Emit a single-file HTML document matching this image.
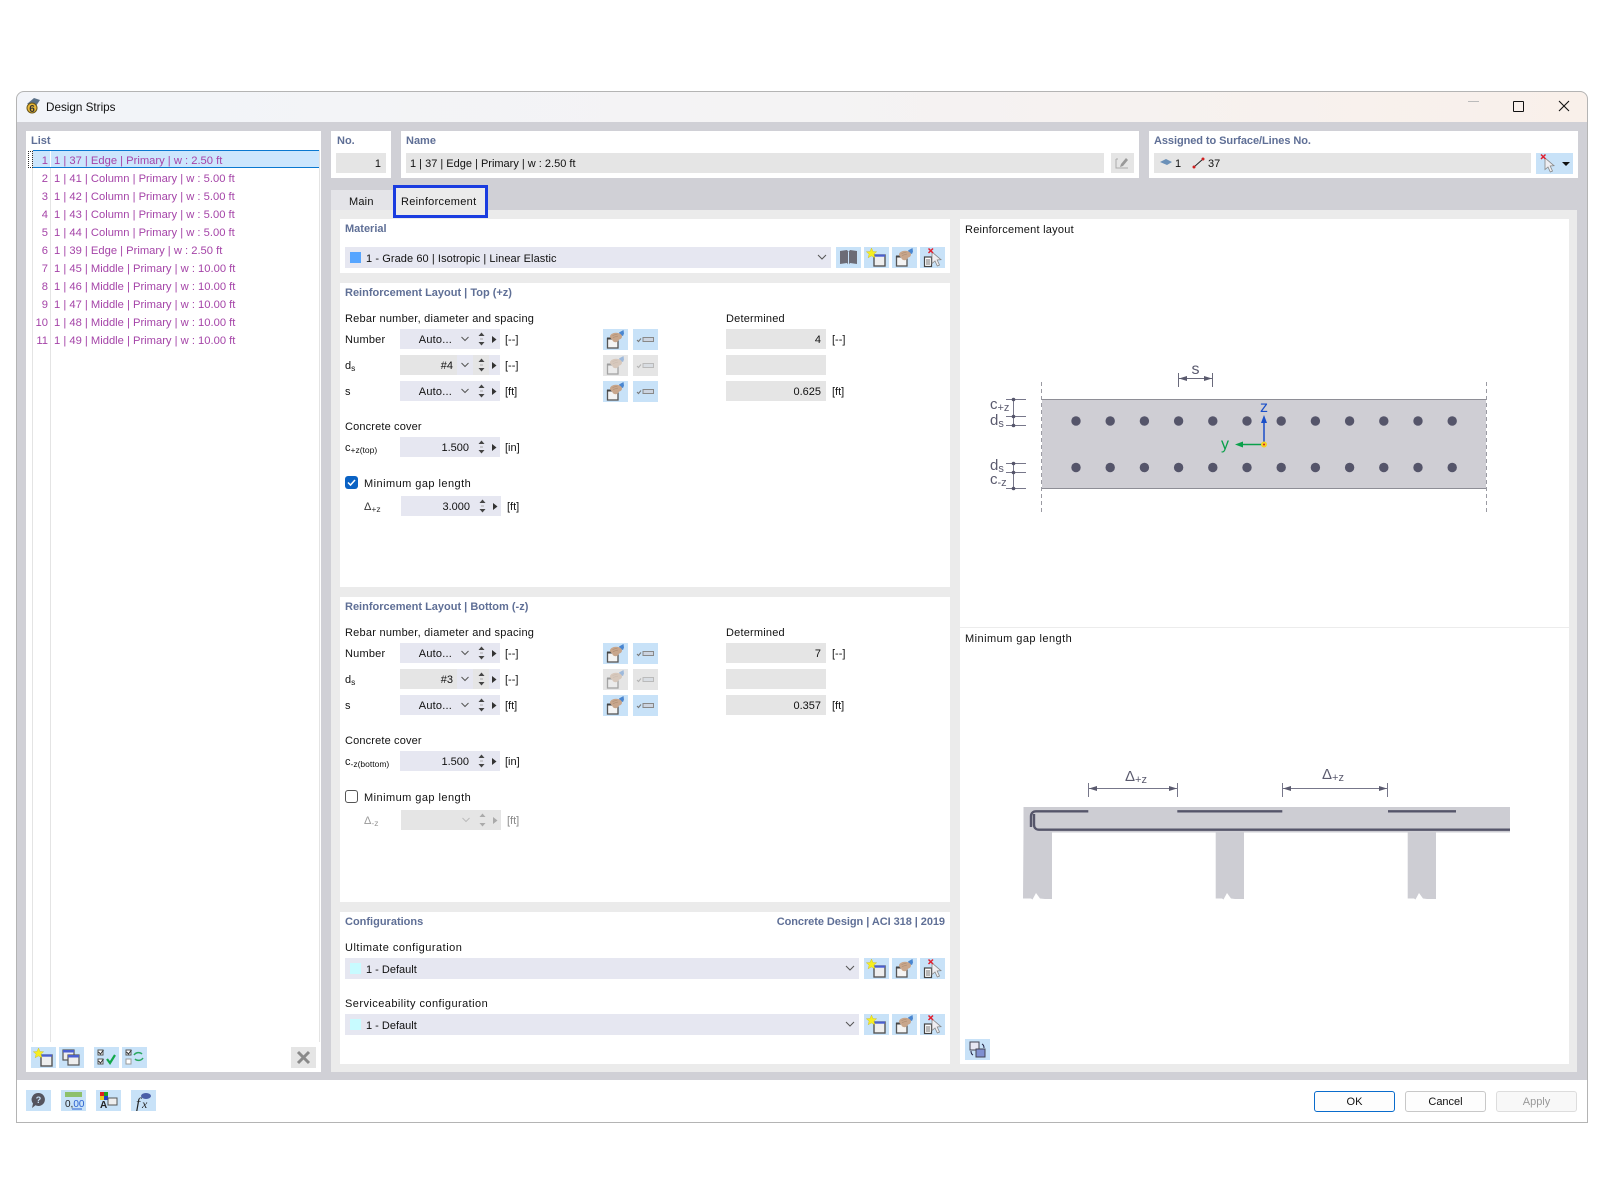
<!DOCTYPE html>
<html><head><meta charset="utf-8"><title>Design Strips</title>
<style>
html,body{margin:0;padding:0;background:#fff;width:1600px;height:1200px;overflow:hidden}
body{position:relative;font-family:"Liberation Sans",sans-serif;font-size:11px;color:#111}
div,span.a{position:absolute}
.t{position:absolute;white-space:nowrap;line-height:14px;height:14px;margin-top:1px}
.t.v{margin-top:0}
.r{text-align:right}
.h{font-weight:bold;color:#5f6f96;font-size:11px}
.p{color:#a544a8;font-size:11.2px}
.w{background:#fff}
.f{background:#e5e5e5}
.c{background:#e6e7f1}
.b{position:absolute;width:25px;height:21px;background:#c8e2f8}
.b svg,.ctl{position:absolute;left:0;top:0}
.g{background:#e5e5e5}
sub{font-size:8.5px;vertical-align:-2px;line-height:0}
.btn{position:absolute;top:1091px;width:79px;height:19px;border:1px solid #c8c8c8;border-radius:3px;background:#fdfdfd;text-align:center;line-height:21px;font-size:11px}
.au{letter-spacing:.2px}
.rb{letter-spacing:.24px}
.cc{letter-spacing:.15px}
.de{letter-spacing:.2px}
.mg{letter-spacing:.45px}
</style></head><body>
<svg width="0" height="0" style="position:absolute">
<defs>
<symbol id="new" viewBox="0 0 25 21"><rect x="10" y="8" width="11" height="11" fill="#eee" stroke="#555" stroke-width="1.400"/><rect x="10" y="7.500" width="11" height="2.200" fill="#4a5fd0"/><path d="M7.500 1l1.500 3.500 3.700.2-2.800 2.400 1 3.700L7.500 8.900l-3.400 1.900 1-3.700L2.300 4.700 6 4.500z" fill="#f6ee20" stroke="#c9b820" stroke-width=".4"/></symbol>
<symbol id="edit" viewBox="0 0 25 21"><rect x="4.500" y="9.500" width="10.500" height="9.500" fill="#f4f4f4" stroke="#555" stroke-width="1.300"/><rect x="4" y="8.500" width="11.500" height="2" fill="#444"/><path d="M16 3.500l4.500-2.500.5 3.500-1 2.500-3-1z" fill="#4a86d0"/><ellipse cx="13" cy="7.500" rx="6" ry="3.800" fill="#c8a68c"/><ellipse cx="12.500" cy="10.800" rx="3.200" ry="2.400" fill="#c8a68c"/><path d="M9.500 6.500l5-1.500M10 8.500l5-1.500" stroke="#a98a70" stroke-width=".6"/></symbol>
<symbol id="del" viewBox="0 0 25 21"><rect x="4.500" y="10" width="7" height="9.500" fill="#fff" stroke="#444" stroke-width="1.200"/><path d="M6 13h4M6 15h4M6 17h4" stroke="#444" stroke-width=".8"/><path d="M12 5l0 11.500 3-2.500 2.300 5 2.200-1-2.300-5 3.800-.3z" fill="#eeeef2" stroke="#888" stroke-width=".8"/><path d="M8.500 1.500l4.500 4.500M13 1.500L8.500 6" stroke="#e02030" stroke-width="1.500"/></symbol>
<symbol id="book" viewBox="0 0 25 21"><path d="M4 4l7-1 1.500 2 1.500-2 7 1v13l-7-1-1.500 2-1.500-2-7 1z" fill="#6c6c76"/><path d="M12.500 5v13" stroke="#c8e2f8" stroke-width="1"/></symbol>
<symbol id="chk" viewBox="0 0 25 21"><path d="M4 11l1.500 1.500L8 9.500" stroke="#777" stroke-width="1.100" fill="none"/><rect x="10" y="8.500" width="10.500" height="4" fill="#ccd4e0" stroke="#888" stroke-width="1"/></symbol>
<symbol id="ctl" viewBox="0 0 100 20"><path d="M61.500 8l3.500 3.500L68.500 8" fill="none" stroke="#555" stroke-width="1"/><path d="M81.500 3.500l3 3.500h-6zM81.500 16.500l-3-3.500h6z" fill="#444"/><path d="M80 10h3" stroke="#aaa"/><path d="M92 7l4.500 3.500L92 14z" fill="#333"/></symbol>
<symbol id="ctl2" viewBox="0 0 100 20"><path d="M81.500 3.500l3 3.500h-6zM81.500 16.500l-3-3.500h6z" fill="#444"/><path d="M80 10h3" stroke="#aaa"/><path d="M92 7l4.500 3.500L92 14z" fill="#333"/></symbol>
<symbol id="ctl3" viewBox="0 0 100 20"><path d="M61.500 8l3.500 3.500L68.500 8" fill="none" stroke="#bbb" stroke-width="1"/><path d="M81.500 3.500l3 3.500h-6zM81.500 16.500l-3-3.500h6z" fill="#aaa"/><path d="M92 7l4.500 3.500L92 14z" fill="#aaa"/></symbol>
<symbol id="chev" viewBox="0 0 12 8"><path d="M2 2l4 4 4-4" fill="none" stroke="#555" stroke-width="1"/></symbol>
</defs>
</svg>

<!-- window -->
<div style="left:16px;top:91px;width:1572px;height:1032px;background:#fff;border-radius:8px 8px 0 0"></div>
<div style="left:16px;top:91px;width:1572px;height:31px;border-radius:8px 8px 0 0;background:linear-gradient(90deg,#f2f4f9,#f4f3f4 50%,#f9f0ea)"></div>
<svg style="position:absolute;left:24px;top:97px" width="18" height="18" viewBox="0 0 18 18"><path d="M3 7l7-6 6 2-4 6z" fill="#5a7088"/><circle cx="8" cy="11" r="5" fill="#e8b93a" stroke="#6a5518"/><text x="8" y="15" font-size="10" font-weight="bold" text-anchor="middle" font-family="Liberation Sans" fill="#333">6</text></svg>
<div class="t" style="left:46px;top:100px;font-size:11.7px">Design Strips</div>
<div style="left:1468px;top:101px;width:11px;height:1px;background:#bbb"></div>
<div style="left:1513px;top:101px;width:9px;height:9px;border:1.300px solid #111;border-radius:1px"></div>
<svg style="position:absolute;left:1558px;top:100px" width="12" height="12"><path d="M1 1l10 10M11 1L1 11" stroke="#111" stroke-width="1.100"/></svg>

<!-- main gray -->
<div style="left:16px;top:122px;width:1572px;height:958px;background:#d0d0d6"></div>

<!-- list -->
<div class="w" style="left:26px;top:131px;width:295px;height:941px"></div>
<div class="t h" style="left:31px;top:133px">List</div>
<div style="left:32px;top:150px;width:1px;height:892px;background:#e4e4e4"></div>
<div style="left:50px;top:150px;width:1px;height:892px;background:#e4e4e4"></div>
<div style="left:319px;top:150px;width:1px;height:892px;background:#e4e4e4"></div>
<div style="left:33px;top:150px;width:286px;height:16px;background:#cce6fd;border-top:1px solid #0a78d0;border-bottom:1px solid #0a78d0"></div>
<div style="left:50px;top:151px;width:1px;height:16px;background:#fff"></div>
<div style="left:28px;top:151px;width:3px;height:15px;border:1px dotted #333"></div>
<div class="t r p" style="left:28px;width:20px;top:153px">1</div><div class="t p" style="left:54px;top:153px">1 | 37 | Edge | Primary | w : 2.50 ft</div>
<div class="t r p" style="left:28px;width:20px;top:171px">2</div><div class="t p" style="left:54px;top:171px">1 | 41 | Column | Primary | w : 5.00 ft</div>
<div class="t r p" style="left:28px;width:20px;top:189px">3</div><div class="t p" style="left:54px;top:189px">1 | 42 | Column | Primary | w : 5.00 ft</div>
<div class="t r p" style="left:28px;width:20px;top:207px">4</div><div class="t p" style="left:54px;top:207px">1 | 43 | Column | Primary | w : 5.00 ft</div>
<div class="t r p" style="left:28px;width:20px;top:225px">5</div><div class="t p" style="left:54px;top:225px">1 | 44 | Column | Primary | w : 5.00 ft</div>
<div class="t r p" style="left:28px;width:20px;top:243px">6</div><div class="t p" style="left:54px;top:243px">1 | 39 | Edge | Primary | w : 2.50 ft</div>
<div class="t r p" style="left:28px;width:20px;top:261px">7</div><div class="t p" style="left:54px;top:261px">1 | 45 | Middle | Primary | w : 10.00 ft</div>
<div class="t r p" style="left:28px;width:20px;top:279px">8</div><div class="t p" style="left:54px;top:279px">1 | 46 | Middle | Primary | w : 10.00 ft</div>
<div class="t r p" style="left:28px;width:20px;top:297px">9</div><div class="t p" style="left:54px;top:297px">1 | 47 | Middle | Primary | w : 10.00 ft</div>
<div class="t r p" style="left:28px;width:20px;top:315px">10</div><div class="t p" style="left:54px;top:315px">1 | 48 | Middle | Primary | w : 10.00 ft</div>
<div class="t r p" style="left:28px;width:20px;top:333px">11</div><div class="t p" style="left:54px;top:333px">1 | 49 | Middle | Primary | w : 10.00 ft</div>

<!-- list buttons -->
<div class="b" style="left:31px;top:1047px"><svg width="25" height="21"><use href="#new"/></svg></div>
<div class="b" style="left:59px;top:1047px"><svg width="25" height="21" viewBox="0 0 25 21"><rect x="4" y="3" width="11" height="10" fill="#eee" stroke="#555" stroke-width="1.200"/><rect x="4" y="3" width="11" height="2.500" fill="#4a5fd0"/><rect x="9" y="8" width="11" height="10" fill="#eee" stroke="#555" stroke-width="1.200"/><rect x="9" y="8" width="11" height="2.500" fill="#4a5fd0"/></svg></div>
<div class="b" style="left:94px;top:1047px"><svg width="25" height="21" viewBox="0 0 25 21"><rect x="4" y="3" width="5" height="5" fill="#fff" stroke="#555"/><rect x="4" y="12" width="5" height="5" fill="#fff" stroke="#555"/><path d="M4.500 5l2 2 3-4M4.500 14l2 2 3-4" stroke="#333" fill="none"/><path d="M13 12l3 4 5-8" stroke="#12a84a" stroke-width="2.200" fill="none"/></svg></div>
<div class="b" style="left:122px;top:1047px"><svg width="25" height="21" viewBox="0 0 25 21"><rect x="4" y="3" width="5" height="5" fill="#fff" stroke="#555"/><rect x="4" y="12" width="5" height="5" fill="#fff" stroke="#999"/><path d="M4.500 5l2 2 3-4" stroke="#333" fill="none"/><path d="M12 8c2-3 6-3 8-1M21 11c-2 3-6 3-8 1" stroke="#2aa860" stroke-width="1.500" fill="none"/></svg></div>
<div class="b g" style="left:291px;top:1047px"><svg width="25" height="21" viewBox="0 0 25 21"><path d="M7 5l11 11M18 5L7 16" stroke="#8a8a8a" stroke-width="3"/></svg></div>

<!-- No -->
<div class="w" style="left:331px;top:131px;width:60px;height:47px"></div>
<div class="t h" style="left:337px;top:133px">No.</div>
<div class="f" style="left:336px;top:153px;width:50px;height:20px"></div>
<div class="t r v" style="left:336px;width:45px;top:157px">1</div>

<!-- Name -->
<div class="w" style="left:401px;top:131px;width:738px;height:47px"></div>
<div class="t h" style="left:406px;top:133px">Name</div>
<div class="f" style="left:406px;top:153px;width:698px;height:20px"></div>
<div class="t v" style="left:410px;top:157px">1 | 37 | Edge | Primary | w : 2.50 ft</div>
<div class="b g" style="left:1111px;top:153px;width:23px;height:20px"><svg width="23" height="20" viewBox="0 0 23 20"><path d="M5 6v9h12M7 6H5" stroke="#aaa" fill="none"/><path d="M9 14l1-3 5-6 2 2-5 6z" fill="#999"/></svg></div>

<!-- Assigned -->
<div class="w" style="left:1149px;top:131px;width:429px;height:47px"></div>
<div class="t h" style="left:1154px;top:133px;letter-spacing:-.07px">Assigned to Surface/Lines No.</div>
<div class="f" style="left:1154px;top:153px;width:377px;height:20px"></div>
<svg style="position:absolute;left:1160px;top:156px" width="50" height="14" viewBox="0 0 50 14"><path d="M0 6l6-3 6 3-5 3z" fill="#6a90b8"/><path d="M34 11l9-8" stroke="#222" stroke-width="1"/><circle cx="34" cy="11" r="1.500" fill="#d02020"/><circle cx="43" cy="3" r="1.500" fill="#d02020"/></svg>
<div class="t v" style="left:1175px;top:157px">1</div>
<div class="t v" style="left:1208px;top:157px">37</div>
<div class="b" style="left:1536px;top:153px;width:37px"><svg width="37" height="21" viewBox="0 0 37 21"><path d="M9 5l0 11.500 3-2.500 2.300 5 2.200-1-2.300-5 3.800-.3z" fill="#eeeef2" stroke="#888" stroke-width=".8"/><path d="M5 1.500l4.500 4.500M9.500 1.500L5 6" stroke="#e02030" stroke-width="1.500"/><path d="M26 9h8l-4 4z" fill="#111"/></svg></div>

<!-- tabs -->
<div style="left:331px;top:190px;width:62px;height:20px;background:#e4e4e8"></div>
<div class="t" style="left:349px;top:194px;letter-spacing:.2px">Main</div>
<div style="left:331px;top:210px;width:1246px;height:862px;background:#ebebeb"></div>
<div style="left:393px;top:185px;width:89px;height:27px;border:3px solid #1a3ce0;background:#ebebeb"></div>
<div class="t" style="left:401px;top:194px;letter-spacing:.3px">Reinforcement</div>

<!-- Material -->
<div class="w" style="left:340px;top:219px;width:610px;height:54px"></div>
<div class="t h" style="left:345px;top:221px">Material</div>
<div class="c" style="left:345px;top:247px;width:486px;height:21px"></div>
<div style="left:350px;top:252px;width:11px;height:11px;background:#56a5ff"></div>
<div class="t" style="left:366px;top:251px;letter-spacing:.08px">1 - Grade 60 | Isotropic | Linear Elastic</div>
<svg style="position:absolute;left:816px;top:253px" width="12" height="8"><use href="#chev"/></svg>
<div class="b" style="left:836px;top:247px"><svg width="25" height="21"><use href="#book"/></svg></div>
<div class="b" style="left:864px;top:247px"><svg width="25" height="21"><use href="#new"/></svg></div>
<div class="b" style="left:892px;top:247px"><svg width="25" height="21"><use href="#edit"/></svg></div>
<div class="b" style="left:920px;top:247px"><svg width="25" height="21"><use href="#del"/></svg></div>

<!-- Top panel -->
<div class="w" style="left:340px;top:283px;width:610px;height:304px"></div>
<div class="t h" style="left:345px;top:285px">Reinforcement Layout | Top (+z)</div>
<div class="t rb" style="left:345px;top:311px">Rebar number, diameter and spacing</div>
<div class="t de" style="left:726px;top:311px">Determined</div>
<div class="t au" style="left:345px;top:332px">Number</div>
<div class="c" style="left:400px;top:329px;width:100px;height:20px"><svg class="ctl" width="100" height="20"><use href="#ctl"/></svg></div>
<div class="t r au v" style="left:400px;width:52px;top:333px">Auto...</div>
<div class="t v" style="left:505px;top:333px">[--]</div>
<div class="b" style="left:603px;top:329px"><svg width="25" height="21"><use href="#edit"/></svg></div>
<div class="b" style="left:633px;top:329px"><svg width="25" height="21"><use href="#chk"/></svg></div>
<div class="f" style="left:726px;top:329px;width:100px;height:20px"></div>
<div class="t r v" style="left:726px;width:95px;top:333px">4</div>
<div class="t v" style="left:832px;top:333px">[--]</div>

<div class="t" style="left:345px;top:358px">d<sub>s</sub></div>
<div class="c" style="left:400px;top:355px;width:100px;height:20px"><div class="f" style="left:0;top:0;width:57px;height:20px"></div><div class="f" style="left:73px;top:0;width:16px;height:20px"></div><svg class="ctl" width="100" height="20"><use href="#ctl"/></svg></div>
<div class="t r v" style="left:400px;width:53px;top:359px">#4</div>
<div class="t v" style="left:505px;top:359px">[--]</div>
<div class="b g" style="left:603px;top:355px"><svg width="25" height="21" opacity=".45"><use href="#edit"/></svg></div>
<div class="b g" style="left:633px;top:355px"><svg width="25" height="21" opacity=".45"><use href="#chk"/></svg></div>
<div class="f" style="left:726px;top:355px;width:100px;height:20px"></div>

<div class="t" style="left:345px;top:384px">s</div>
<div class="c" style="left:400px;top:381px;width:100px;height:20px"><svg class="ctl" width="100" height="20"><use href="#ctl"/></svg></div>
<div class="t r au v" style="left:400px;width:52px;top:385px">Auto...</div>
<div class="t v" style="left:505px;top:385px">[ft]</div>
<div class="b" style="left:603px;top:381px"><svg width="25" height="21"><use href="#edit"/></svg></div>
<div class="b" style="left:633px;top:381px"><svg width="25" height="21"><use href="#chk"/></svg></div>
<div class="f" style="left:726px;top:381px;width:100px;height:20px"></div>
<div class="t r v" style="left:726px;width:95px;top:385px">0.625</div>
<div class="t v" style="left:832px;top:385px">[ft]</div>

<div class="t cc" style="left:345px;top:419px">Concrete cover</div>
<div class="t v" style="left:345px;top:441px">c<sub>+z(top)</sub></div>
<div class="c" style="left:400px;top:437px;width:100px;height:20px"><svg class="ctl" width="100" height="20"><use href="#ctl2"/></svg></div>
<div class="t r v" style="left:400px;width:69px;top:441px">1.500</div>
<div class="t v" style="left:505px;top:441px">[in]</div>
<div style="left:345px;top:476px;width:13px;height:13px;background:#0a62c4;border-radius:3px"><svg style="position:absolute;left:0;top:0" width="13" height="13"><path d="M3 6.500l2.500 2.500L10 4" stroke="#fff" stroke-width="1.500" fill="none"/></svg></div>
<div class="t mg" style="left:364px;top:476px">Minimum gap length</div>
<div class="t v" style="left:364px;top:500px;color:#333">&#916;<sub>+z</sub></div>
<div class="c" style="left:401px;top:496px;width:100px;height:20px"><svg class="ctl" width="100" height="20"><use href="#ctl2"/></svg></div>
<div class="t r v" style="left:401px;width:69px;top:500px">3.000</div>
<div class="t v" style="left:507px;top:500px">[ft]</div>

<!-- Bottom panel -->
<div class="w" style="left:340px;top:597px;width:610px;height:305px"></div>
<div class="t h" style="left:345px;top:599px">Reinforcement Layout | Bottom (-z)</div>
<div class="t rb" style="left:345px;top:625px">Rebar number, diameter and spacing</div>
<div class="t de" style="left:726px;top:625px">Determined</div>
<div class="t au" style="left:345px;top:646px">Number</div>
<div class="c" style="left:400px;top:643px;width:100px;height:20px"><svg class="ctl" width="100" height="20"><use href="#ctl"/></svg></div>
<div class="t r au v" style="left:400px;width:52px;top:647px">Auto...</div>
<div class="t v" style="left:505px;top:647px">[--]</div>
<div class="b" style="left:603px;top:643px"><svg width="25" height="21"><use href="#edit"/></svg></div>
<div class="b" style="left:633px;top:643px"><svg width="25" height="21"><use href="#chk"/></svg></div>
<div class="f" style="left:726px;top:643px;width:100px;height:20px"></div>
<div class="t r v" style="left:726px;width:95px;top:647px">7</div>
<div class="t v" style="left:832px;top:647px">[--]</div>

<div class="t" style="left:345px;top:672px">d<sub>s</sub></div>
<div class="c" style="left:400px;top:669px;width:100px;height:20px"><div class="f" style="left:0;top:0;width:57px;height:20px"></div><div class="f" style="left:73px;top:0;width:16px;height:20px"></div><svg class="ctl" width="100" height="20"><use href="#ctl"/></svg></div>
<div class="t r v" style="left:400px;width:53px;top:673px">#3</div>
<div class="t v" style="left:505px;top:673px">[--]</div>
<div class="b g" style="left:603px;top:669px"><svg width="25" height="21" opacity=".45"><use href="#edit"/></svg></div>
<div class="b g" style="left:633px;top:669px"><svg width="25" height="21" opacity=".45"><use href="#chk"/></svg></div>
<div class="f" style="left:726px;top:669px;width:100px;height:20px"></div>

<div class="t" style="left:345px;top:698px">s</div>
<div class="c" style="left:400px;top:695px;width:100px;height:20px"><svg class="ctl" width="100" height="20"><use href="#ctl"/></svg></div>
<div class="t r au v" style="left:400px;width:52px;top:699px">Auto...</div>
<div class="t v" style="left:505px;top:699px">[ft]</div>
<div class="b" style="left:603px;top:695px"><svg width="25" height="21"><use href="#edit"/></svg></div>
<div class="b" style="left:633px;top:695px"><svg width="25" height="21"><use href="#chk"/></svg></div>
<div class="f" style="left:726px;top:695px;width:100px;height:20px"></div>
<div class="t r v" style="left:726px;width:95px;top:699px">0.357</div>
<div class="t v" style="left:832px;top:699px">[ft]</div>

<div class="t cc" style="left:345px;top:733px">Concrete cover</div>
<div class="t v" style="left:345px;top:755px">c<sub>-z(bottom)</sub></div>
<div class="c" style="left:400px;top:751px;width:100px;height:20px"><svg class="ctl" width="100" height="20"><use href="#ctl2"/></svg></div>
<div class="t r v" style="left:400px;width:69px;top:755px">1.500</div>
<div class="t v" style="left:505px;top:755px">[in]</div>
<div style="left:345px;top:790px;width:11px;height:11px;border:1px solid #555;border-radius:3px;background:#fff"></div>
<div class="t mg" style="left:364px;top:790px">Minimum gap length</div>
<div class="t v" style="left:364px;top:814px;color:#999">&#916;<sub>-z</sub></div>
<div class="f" style="left:401px;top:810px;width:100px;height:20px"><svg class="ctl" width="100" height="20"><use href="#ctl3"/></svg></div>
<div class="t v" style="left:507px;top:814px;color:#888">[ft]</div>

<!-- Config -->
<div class="w" style="left:340px;top:912px;width:610px;height:152px"></div>
<div class="t h" style="left:345px;top:914px">Configurations</div>
<div class="t h r" style="left:645px;width:300px;top:914px;letter-spacing:-.06px">Concrete Design | ACI 318 | 2019</div>
<div class="t" style="left:345px;top:940px;letter-spacing:.5px">Ultimate configuration</div>
<div class="c" style="left:345px;top:958px;width:514px;height:21px"></div>
<div style="left:350px;top:963px;width:11px;height:11px;background:#c8fbff"></div>
<div class="t" style="left:366px;top:962px">1 - Default</div>
<svg style="position:absolute;left:844px;top:964px" width="12" height="8"><use href="#chev"/></svg>
<div class="b" style="left:864px;top:958px"><svg width="25" height="21"><use href="#new"/></svg></div>
<div class="b" style="left:892px;top:958px"><svg width="25" height="21"><use href="#edit"/></svg></div>
<div class="b" style="left:920px;top:958px"><svg width="25" height="21"><use href="#del"/></svg></div>
<div class="t" style="left:345px;top:996px;letter-spacing:.44px">Serviceability configuration</div>
<div class="c" style="left:345px;top:1014px;width:514px;height:21px"></div>
<div style="left:350px;top:1019px;width:11px;height:11px;background:#c8fbff"></div>
<div class="t" style="left:366px;top:1018px">1 - Default</div>
<svg style="position:absolute;left:844px;top:1020px" width="12" height="8"><use href="#chev"/></svg>
<div class="b" style="left:864px;top:1014px"><svg width="25" height="21"><use href="#new"/></svg></div>
<div class="b" style="left:892px;top:1014px"><svg width="25" height="21"><use href="#edit"/></svg></div>
<div class="b" style="left:920px;top:1014px"><svg width="25" height="21"><use href="#del"/></svg></div>

<!-- Right panel -->
<div class="w" style="left:960px;top:219px;width:609px;height:845px"></div>
<div style="left:960px;top:627px;width:609px;height:1px;background:#ececec"></div>
<div class="t" style="left:965px;top:222px;letter-spacing:.25px">Reinforcement layout</div>
<div class="t mg" style="left:965px;top:631px">Minimum gap length</div>
<svg style="position:absolute;left:960px;top:219px" width="609" height="845" viewBox="960 219 609 845" font-family="Liberation Sans" fill="#5a5a6e">
<!-- section -->
<rect x="1042" y="399" width="444" height="89" fill="#cfced4"/>
<path d="M1042 399.500h444M1042 488.500h444" stroke="#8e8e96" stroke-width="1"/>
<path d="M1041.500 382v131M1486.500 382v131" stroke="#9a9aa2" stroke-width="1" stroke-dasharray="4 3"/>
<g fill="#55556a">
<circle cx="1076" cy="421" r="4.700"/><circle cx="1110.200" cy="421" r="4.700"/><circle cx="1144.400" cy="421" r="4.700"/><circle cx="1178.600" cy="421" r="4.700"/><circle cx="1212.800" cy="421" r="4.700"/><circle cx="1247" cy="421" r="4.700"/><circle cx="1281.200" cy="421" r="4.700"/><circle cx="1315.400" cy="421" r="4.700"/><circle cx="1349.600" cy="421" r="4.700"/><circle cx="1383.800" cy="421" r="4.700"/><circle cx="1418" cy="421" r="4.700"/><circle cx="1452.200" cy="421" r="4.700"/>
<circle cx="1076" cy="467.500" r="4.700"/><circle cx="1110.200" cy="467.500" r="4.700"/><circle cx="1144.400" cy="467.500" r="4.700"/><circle cx="1178.600" cy="467.500" r="4.700"/><circle cx="1212.800" cy="467.500" r="4.700"/><circle cx="1247" cy="467.500" r="4.700"/><circle cx="1281.200" cy="467.500" r="4.700"/><circle cx="1315.400" cy="467.500" r="4.700"/><circle cx="1349.600" cy="467.500" r="4.700"/><circle cx="1383.800" cy="467.500" r="4.700"/><circle cx="1418" cy="467.500" r="4.700"/><circle cx="1452.200" cy="467.500" r="4.700"/>
</g>
<!-- s dim -->
<path d="M1178.500 373v14M1212.500 373v14M1178.500 378.500h34" stroke="#6a6a7c" stroke-width="1" fill="none"/>
<path d="M1179 378.500l8-2.500v5zM1212 378.500l-8-2.500v5z" fill="#5a5a6e"/>
<text x="1195.500" y="374" font-size="16" text-anchor="middle">s</text>
<!-- left dims -->
<path d="M1013.500 399v27M1006 399.500h20M1006 416.500h20M1006 425.500h20M1013.500 463v25M1006 463.500h20M1006 472.500h20M1006 488.500h20" stroke="#77778a" stroke-width="1" fill="none"/>
<g fill="#55556a"><circle cx="1013.500" cy="399.500" r="1.800"/><circle cx="1013.500" cy="416.500" r="1.800"/><circle cx="1013.500" cy="425.500" r="1.800"/><circle cx="1013.500" cy="463.500" r="1.800"/><circle cx="1013.500" cy="472.500" r="1.800"/><circle cx="1013.500" cy="488.500" r="1.800"/></g>
<text x="990" y="409" font-size="15">c<tspan font-size="11" dy="2">+z</tspan></text>
<text x="990" y="425" font-size="15">d<tspan font-size="11" dy="2">s</tspan></text>
<text x="990" y="470" font-size="15">d<tspan font-size="11" dy="2">s</tspan></text>
<text x="990" y="484" font-size="15">c<tspan font-size="11" dy="2">-z</tspan></text>
<!-- axes -->
<path d="M1264 444V420" stroke="#1a4fc8" stroke-width="1.500"/><path d="M1264 415l-3 8h6z" fill="#1a4fc8"/>
<path d="M1264 444.500H1240" stroke="#0aa04a" stroke-width="1.500"/><path d="M1235 444.500l8-3v6z" fill="#0aa04a"/>
<circle cx="1264" cy="444.500" r="3" fill="#f6d020"/><circle cx="1264" cy="444.500" r="1" fill="#d02020"/>
<text x="1264" y="412" font-size="16" text-anchor="middle" fill="#1a4fc8">z</text>
<text x="1225" y="449" font-size="16" text-anchor="middle" fill="#0aa04a">y</text>

<!-- gap figure -->
<rect x="1023.500" y="807" width="486.500" height="25.500" fill="#cdcdd3"/>
<path d="M1023.500 832h28.500v67h-7l-5-.5-4-5.500-3.500 6.500-1.500-1h-8zM1215.700 832h28.300v67h-9l-4-.5-4-5.500-3.500 6.500-1.500-1h-6.300zM1407.700 832h28.300v67h-9l-4-.5-4-5.500-3.500 6.500-1.500-1h-6.300z" fill="#cdcdd3"/>
<path d="M1088.300 811.300H1036c-3 0-5 2-5 5V827M1177.300 811.300h105M1388 811.300h68" stroke="#55556a" stroke-width="2.400" fill="none"/>
<path d="M1510 829.700H1039c-3 0-5-2-5-5V814" stroke="#55556a" stroke-width="2.400" fill="none"/>
<path d="M1088.500 783v14M1177.500 783v14M1282.500 783v14M1387.500 783v14M1088.500 788.500h89M1282.500 788.500h105" stroke="#77778a" stroke-width="1" fill="none"/>
<path d="M1089 788.500l8-2.500v5zM1177 788.500l-8-2.500v5zM1283 788.500l8-2.500v5zM1387 788.500l-8-2.500v5z" fill="#5a5a6e"/>
<text x="1125" y="781" font-size="15">&#916;<tspan font-size="11" dy="2">+z</tspan></text>
<text x="1322" y="779" font-size="15">&#916;<tspan font-size="11" dy="2">+z</tspan></text>
</svg>
<div class="b" style="left:965px;top:1039px"><svg width="25" height="21" viewBox="0 0 25 21"><rect x="5" y="3" width="9" height="8" fill="#e8e8f4" stroke="#445"/><rect x="11" y="10" width="9" height="8" fill="#8090d0" stroke="#445"/><path d="M17 5c2 1 2 3 2 4M8 16c-2-1-2-3-2-4" stroke="#224" fill="none"/></svg></div>

<!-- footer -->
<div class="b" style="left:26px;top:1090px"><svg width="25" height="21" viewBox="0 0 25 21"><path d="M12.500 3a6.500 6.500 0 1 1-3 12.300L6 18l1-4.500A6.500 6.500 0 0 1 12.500 3z" fill="#55555f"/><text x="12.500" y="13" font-size="9" font-weight="bold" fill="#c8e2f8" text-anchor="middle" font-family="Liberation Sans">?</text></svg></div>
<div class="b" style="left:61px;top:1090px"><svg width="25" height="21" viewBox="0 0 25 21"><rect x="4" y="2" width="17" height="5" fill="#8ec06a"/><text x="4" y="17" font-size="10" font-family="Liberation Sans" fill="#222">0,<tspan fill="#2a60d0">00</tspan></text><path d="M11 19h10" stroke="#2a60d0"/></svg></div>
<div class="b" style="left:96px;top:1090px"><svg width="25" height="21" viewBox="0 0 25 21"><rect x="4" y="2" width="4" height="4" fill="#e02020"/><rect x="8" y="2" width="4" height="4" fill="#20a020"/><rect x="4" y="6" width="4" height="4" fill="#e8c820"/><rect x="8" y="6" width="4" height="4" fill="#2040d0"/><rect x="12" y="8" width="9" height="7" fill="#eee" stroke="#555"/><text x="4" y="18" font-size="10" font-weight="bold" font-family="Liberation Sans" fill="#222">A</text></svg></div>
<div class="b" style="left:131px;top:1090px"><svg width="25" height="21" viewBox="0 0 25 21"><text x="5" y="18" font-size="15" font-style="italic" font-family="Liberation Serif" fill="#222">f</text><text x="11" y="18" font-size="12" font-style="italic" font-family="Liberation Serif" fill="#222">x</text><ellipse cx="15" cy="6" rx="5" ry="3" fill="#4a5fa8"/></svg></div>

<div class="btn" style="left:1314px;border:1px solid #0a6ccc">OK</div>
<div class="btn" style="left:1405px">Cancel</div>
<div class="btn" style="left:1496px;color:#999;background:#f8f8f8;border-color:#ddd">Apply</div>

<!-- window outline -->
<div style="left:16px;top:91px;width:1570px;height:1030px;border:1px solid #b4b4b4;border-radius:8px 8px 0 0;pointer-events:none"></div>
</body></html>
